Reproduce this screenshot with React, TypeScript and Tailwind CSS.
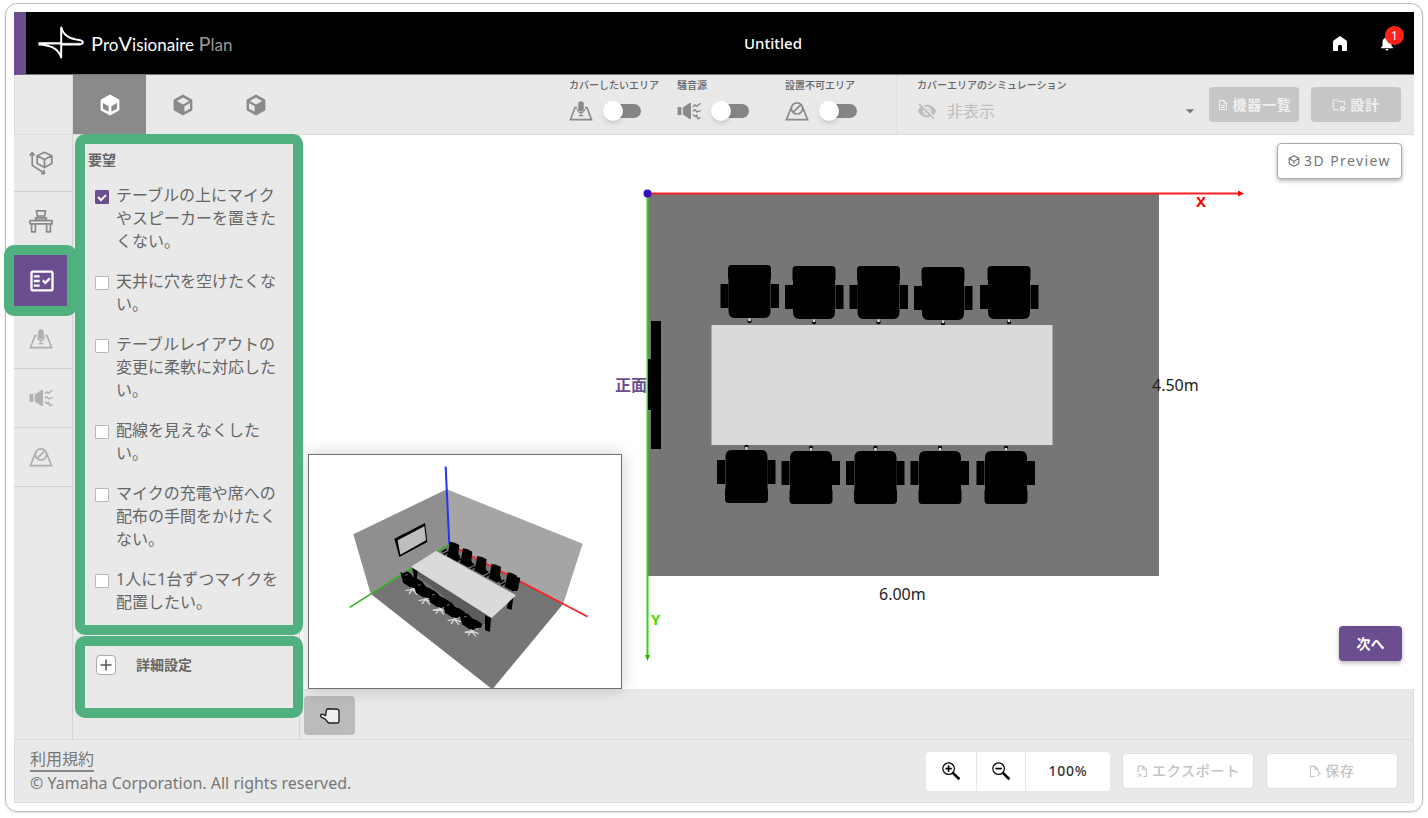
import React, { useState } from "react";
import {
  MdArrowDropDown,
  MdNotifications,
  MdOutlineDescription,
  MdOutlineFactCheck,
  MdVisibilityOff,
} from "react-icons/md";
import { LuFolderCog } from "react-icons/lu";

type IconProps = { className?: string };

const requests = [
  "テーブルの上にマイクやスピーカーを置きたくない。",
  "天井に穴を空けたくない。",
  "テーブルレイアウトの変更に柔軟に対応したい。",
  "配線を見えなくしたい。",
  "マイクの充電や席への配布の手間をかけたくない。",
  "1人に1台ずつマイクを配置したい。",
];

const LogoMark: React.FC<IconProps> = ({ className }) => (
  <svg viewBox="0 0 46 34" className={className} fill="none" aria-hidden="true">
    <path d="M2 17.6 H42" stroke="#aaa" strokeWidth="1.6" />
    <path
      d="M0.5 17.2 H23 M0.5 18.4 C11 19 20 21.4 23.2 31.5 V1.5 C25.5 10.5 33 13 41 14 C46 14.8 46 18.2 41.5 18.4 H24"
      stroke="#fff"
      strokeWidth="2"
      strokeLinejoin="round"
    />
  </svg>
);

const HomeIcon: React.FC<IconProps> = ({ className }) => (
  <svg viewBox="0 0 16 17" className={className} fill="currentColor" aria-hidden="true">
    <path d="M8 1 L14.4 5.6 Q15 6 15 6.8 V15 Q15 16 14 16 H10 V11.6 Q10 9.8 8 9.8 Q6 9.8 6 11.6 V16 H2 Q1 16 1 15 V6.8 Q1 6 1.6 5.6 Z" />
  </svg>
);

const CUBE_TOP = "M12 4.4 L18.2 7.9 L12 11.4 L5.8 7.9 Z";
const CUBE_LEFT = "M5 10 L10.6 13.2 V18.8 L5 15.8 Z";
const CUBE_RIGHT = "M19 10 L13.4 13.2 V18.8 L19 15.8 Z";

// Solid cube where only the given faces are cut out
const CubeIcon: React.FC<IconProps & { open: string[] }> = ({ className, open }) => (
  <svg viewBox="0 0 24 24" className={className} aria-hidden="true">
    <path
      fill="currentColor"
      fillRule="evenodd"
      strokeLinejoin="round"
      d={"M12 1.6 L20.6 6.2 Q21.4 6.7 21.4 7.6 V16.4 Q21.4 17.3 20.6 17.8 L12 22.4 L3.4 17.8 Q2.6 17.3 2.6 16.4 V7.6 Q2.6 6.7 3.4 6.2 Z " + open.join(" ")}
    />
  </svg>
);

const RoomIcon: React.FC<IconProps> = ({ className }) => (
  <svg viewBox="0 0 24 24" className={className} fill="none" stroke="currentColor" strokeWidth="1.7" strokeLinejoin="round" aria-hidden="true">
    <path d="M15.5 1.2 L22.8 4.8 V12.6 L15.5 16.6 L8.2 12.6 V4.8 Z M8.2 4.8 L15.5 8.6 L22.8 4.8 M15.5 8.6 V16.6" />
    <path d="M3.2 2.2 V14.2 L15 22" />
    <path d="M0.8 4.6 L3.2 1.6 L5.6 4.6 M12.2 23 L15.6 22.4 L14.6 18.8" />
  </svg>
);

const DeskIcon: React.FC<IconProps> = ({ className }) => (
  <svg viewBox="0 0 24 24" className={className} fill="none" stroke="currentColor" strokeWidth="1.7" strokeLinejoin="round" aria-hidden="true">
    <path d="M7.4 1.8 H16.6 L15.6 7 H8.4 Z M6.6 8.8 H17.4 V11.2 H6.6 Z M9 7 V8.8 M15 7 V8.8" />
    <path d="M1 11.6 H23 V14.8 H1 Z M2.6 14.8 H6.4 V22.8 H2.6 Z M17.6 14.8 H21.4 V22.8 H17.6 Z" />
  </svg>
);

const CoverIcon: React.FC<IconProps> = ({ className }) => (
  <svg viewBox="0 0 24 20" className={className} fill="none" stroke="currentColor" strokeWidth="1.6" aria-hidden="true">
    <path d="M8 6.6 H6 L1.4 18.6 H22.6 L18 6.6 H16" />
    <rect x="10" y="1" width="4" height="8.6" rx="2" fill="currentColor" />
    <path d="M8.4 8 Q8.8 11.6 12 11.6 Q15.2 11.6 15.600 8 M12 11.6 V14.6 M9.8 14.6 H14.2" strokeWidth="1.2" />
  </svg>
);

const NoiseIcon: React.FC<IconProps> = ({ className }) => (
  <svg viewBox="0 0 24 20" className={className} fill="none" stroke="currentColor" strokeWidth="1.4" aria-hidden="true">
    <path d="M0.6 6 H4.4 V14 H0.6 Z M5.8 6.4 L12.6 2 Q14 1.4 14 3 V17 Q14 18.6 12.6 18 L5.8 13.6 Z" fill="currentColor" stroke="none" />
    <path d="M15.8 6 L18 3.8 L19.4 5.4 L23.4 2.4 M15.8 10 L18.2 8.8 L19.8 11 L23.6 9.6 M15.8 13.6 L18 15.6 L19.6 14.4 L21 17.8 L23.6 16.6" />
  </svg>
);

const NoSetupIcon: React.FC<IconProps> = ({ className }) => (
  <svg viewBox="0 0 24 20" className={className} fill="none" stroke="currentColor" strokeWidth="1.7" aria-hidden="true">
    <path d="M6.2 6.6 L1.4 18.6 H22.6 L17.8 6.6" />
    <circle cx="12" cy="7.4" r="5.6" />
    <path d="M8 11.4 L16 3.6" />
  </svg>
);

const PreviewIcon: React.FC<IconProps> = ({ className }) => (
  <svg viewBox="0 0 12 12" className={className} fill="none" stroke="currentColor" strokeWidth="1.2" strokeLinejoin="round" aria-hidden="true">
    <path d="M6 0.8 L10.8 3.4 V8.6 L6 11.2 L1.2 8.6 V3.4 Z M3.4 4.8 L6 6.4 L8.6 4.8 M6 6.4 V9 M1.2 3.4 L3.4 4.8 M10.8 3.4 L8.6 4.8" />
  </svg>
);

const HandIcon: React.FC<IconProps> = ({ className }) => (
  <svg viewBox="0 0 22 18" className={className} fill="#eee" stroke="#222" strokeWidth="1.4" strokeLinejoin="round" aria-hidden="true">
    <path d="M7.4 3.2 Q7.6 1.8 9 1.8 L18 2.2 Q20 2.4 20 4 V14 Q20 16 18.6 16 H10.4 Q9.4 16 8.6 15 L6.6 12.4 L2.4 10.2 Q1 9 1.8 7.8 Q2.6 6.8 4 7.4 L6.6 8.6 Z" />
  </svg>
);

const MagnifierIcon: React.FC<IconProps & { plus?: boolean }> = ({ className, plus }) => (
  <svg viewBox="0 0 20 20" className={className} fill="none" stroke="#000" aria-hidden="true">
    <circle cx="7.6" cy="7.6" r="5.8" strokeWidth="1.2" />
    <path d="M4.4 7.6 H10.8" strokeWidth="1.7" />
    {plus && <path d="M7.6 4.4 V10.8" strokeWidth="1.7" />}
    <path d="M11.6 11.6 L18.4 18.2" strokeWidth="2.6" />
  </svg>
);

const ExportIcon: React.FC<IconProps> = ({ className }) => (
  <svg viewBox="0 0 12 14" className={className} fill="none" stroke="currentColor" strokeWidth="1.2" aria-hidden="true">
    <path d="M2 7.6 V1.2 H7 L10.6 4.8 V12.4 H7.4 M7 1.2 V4.8 H10.6" />
    <path d="M1.4 10 H4.8 V13.2 M4.8 10 L1.4 13.2" strokeWidth="1" />
  </svg>
);

const SaveIcon: React.FC<IconProps> = ({ className }) => (
  <svg viewBox="0 0 13 14" className={className} fill="none" stroke="currentColor" strokeWidth="1.2" aria-hidden="true">
    <path d="M6 12.4 H1.6 V1.2 H6.4 L9.8 4.6 V6 M6.4 1.2 V4.6 H9.8" />
    <path d="M9.4 7 L12 9.2 L8.6 12.2" />
  </svg>
);

const Chair: React.FC<{ x: number; y: number; flip?: boolean }> = ({ x, y, flip }) => (
  <g transform={`translate(${x} ${y})${flip ? " rotate(180)" : ""}`}>
    <rect x="-29" y="19" width="8" height="24" />
    <rect x="21.5" y="19" width="8" height="24" />
    <path d="M-18 0 H18 Q21.5 0 21.5 4 V13 L21 15 V46 Q21 53 15 53 H-15 Q-21 53 -21 46 V15 L-21.5 13 V4 Q-21.5 0 -18 0 Z" />
    <circle cx="0" cy="56" r="2.2" />
    <rect x="-1.3" y="53.5" width="2.6" height="2.6" fill="#ddd" />
  </g>
);

const topChairs = [
  [101.5, 72],
  [166, 73],
  [230.5, 73],
  [295, 74],
  [361, 73],
];
const bottomChairs = [
  [98.5, 310],
  [163, 311],
  [227.5, 311],
  [292, 311],
  [358, 311],
];

const FloorPlan: React.FC = () => (
  <svg
    viewBox="0 0 1114 554"
    className="h-full w-full font-['Noto_Sans','Noto_Sans_CJK_JP',sans-serif]"
    role="img"
    aria-label="Floor plan"
  >
    <g transform="translate(348 58)">
      <rect width="511" height="383" fill="#767676" />
      <rect x="63.5" y="132" width="341" height="120" fill="#dadada" />
      <path d="M3 128 H13 V256 H3 V217 H0 V166 H3 Z" />
      {topChairs.map(([x, y]) => (
        <Chair key={x} x={x} y={y} />
      ))}
      {bottomChairs.map(([x, y]) => (
        <Chair key={x} x={x} y={y} flip />
      ))}
      <path d="M0 0.5 H591" stroke="#f52222" strokeWidth="2" />
      <path d="M590 -2.5 L596 0.5 L590 3.5 Z" fill="#f00" />
      <path d="M-0.5 0 V464" stroke="#3ccc1c" strokeWidth="2" />
      <path d="M0 166 H3 V217 H0 Z" />
      <path d="M-3 462 L-0.5 468 L2 462 Z" fill="#2b0" />
      <circle cx="-0.5" cy="0.5" r="4" fill="#3a0cc4" />
      <text x="548" y="14" fontSize="15" fontWeight="700" fill="#f00">
        X
      </text>
      <text x="3" y="432" fontSize="15" fontWeight="700" fill="#4fd800">
        Y
      </text>
      <text x="-33" y="198" fontSize="16" fontWeight="700" fill="#6b4f8f">
        正面
      </text>
      <text x="504" y="198" fontSize="16" fill="#222">
        4.50m
      </text>
      <text x="231" y="407" fontSize="16" fill="#222">
        6.00m
      </text>
    </g>
  </svg>
);

const backSeats = [
  [448, 290],
  [487, 310],
  [530, 333],
  [573, 356],
  [621, 382],
];
const frontSeats = [
  [337, 404],
  [376, 434],
  [418, 463],
  [463, 494],
  [514, 529],
];

const RoomView: React.FC = () => (
  <svg viewBox="27 29 936 699" className="block h-[233px] w-[312px]" role="img" aria-label="Room view">
    <path d="M160 267 L440 132 L448 297 L212 445 Z" fill="#8f8f8f" />
    <path d="M440 132 L848 295 L790 475 L448 297 Z" fill="#a5a5a5" />
    <path d="M448 297 L790 475 L577 732 L212 445 Z" fill="#757575" />
    <path d="M283 280 L375 233 L382 290 L298 335 Z" />
    <path d="M293 285 L373 243 L378 285 L301 328 Z" fill="#bdbdbd" />
    <path d="M448 297 L149 486" stroke="#2eb51c" strokeWidth="5" />
    <path d="M448 297 L863 514" stroke="#f22" strokeWidth="5" />
    <path d="M437 64 L448 297" stroke="#2434f0" strokeWidth="6" />
    {backSeats.map(([x, y]) => (
      <g key={x} transform={`translate(${x} ${y})`}>
        <path d="M2 -1 Q16 0 30 9 L27 34 L32 50 L18 56 L-8 42 L-4 32 Z" />
        <path d="M-22 30 L-8 22 M-18 38 L-4 30" stroke="#000" strokeWidth="5" />
      </g>
    ))}
    <path d="M650 394 L661 398 L653 436 L636 438 Z" />
    <path d="M333 364 L575 518 L575 530 L540 540 L336 378 Z" fill="#5c5c5c" />
    <path d="M338 368 L353 377 L350 402 L342 398 Z" />
    <path d="M555 510 L573 518 L570 559 L555 555 Z" />
    <path d="M627 460 L640 456 L635 493 L620 489 Z" />
    {frontSeats.map(([x, y]) => (
      <g key={x} transform={`translate(${x} ${y})`}>
        <path
          d="M0 12 V28 M-20 32 L0 28 L22 36 M-10 42 L0 28 L14 44 M22 18 L0 28"
          stroke="#d6d6d6"
          strokeWidth="4"
          fill="none"
        />
        <path d="M-36 -24 L-28 -20 L-16 -26 L-6 -20 L2 -10 L16 -4 L32 6 L30 18 L16 20 L8 25 L-8 21 L-28 8 Z" />
        <path d="M-22 -14 L-14 -16" stroke="#777" strokeWidth="3" />
      </g>
    ))}
    <path d="M408 316 L648 450 L575 518 L333 364 Z" fill="#dadada" />
  </svg>
);

const Toggle: React.FC<{ label: string; icon: React.ReactNode }> = ({ label, icon }) => (
  <label className="flex w-[108px] flex-col gap-[9px] text-[10px] leading-[14px] font-medium text-[#666]">
    <span className="whitespace-nowrap">{label}</span>
    <span className="flex h-5 items-center gap-[14px] text-[#8a8a8a]">
      {icon}
      <input
        type="checkbox"
        role="switch"
        className="flex h-[14px] w-[34px] appearance-none items-center rounded-full bg-[#858585] before:-ml-1 before:block before:size-5 before:shrink-0 before:rounded-full before:bg-white before:shadow-md checked:justify-end checked:bg-[#6b4e8f]"
      />
    </span>
  </label>
);

const railItems = [
  { label: "部屋", icon: <RoomIcon className="size-6" />, tone: "text-[#8a8a8a]" },
  { label: "レイアウト", icon: <DeskIcon className="size-6" />, tone: "text-[#8a8a8a]" },
  { label: "要望", icon: <MdOutlineFactCheck className="size-7" />, active: true },
  { label: "カバーしたいエリア", icon: <CoverIcon className="h-5 w-6" />, tone: "text-[#b0b0b0]" },
  { label: "騒音源", icon: <NoiseIcon className="h-5 w-6" />, tone: "text-[#b0b0b0]" },
  { label: "設置不可エリア", icon: <NoSetupIcon className="h-5 w-6" />, tone: "text-[#b0b0b0]" },
];

const App: React.FC = () => {
  const [checked, setChecked] = useState<number[]>([0]);

  const toggle = (index: number) =>
    setChecked((prev) => (prev.includes(index) ? prev.filter((i) => i !== index) : [...prev, index]));

  return (
    <div className="flex min-h-screen flex-col bg-white px-[5px] pt-[3px] pb-[7px] font-['Noto_Sans','Noto_Sans_CJK_JP',sans-serif]">
      <div className="flex flex-1 flex-col rounded-xl border border-[#bbb] p-2 shadow-sm">
        <header className="flex h-[63px] items-center border-b border-[#777] border-l-[12px] border-l-[#6b4e8f] bg-black pr-[18px] text-white">
          <div className="flex flex-1 items-center gap-[7px] pl-3">
            <LogoMark className="h-[34px] w-[46px]" />
            <div className="font-['Lato',sans-serif] text-[17px] leading-6 whitespace-nowrap">
              <span className="text-xl">P</span>ro<span className="text-xl">V</span>isionaire{" "}
              <span className="text-[#999]">
                <span className="text-xl">P</span>lan
              </span>
            </div>
          </div>
          <h1 className="pl-28 text-[15px] font-medium">Untitled</h1>
          <div className="flex flex-1 items-center justify-end gap-[30px]">
            <button type="button" aria-label="ホーム">
              <HomeIcon className="h-[17px] w-4" />
            </button>
            <button type="button" aria-label="お知らせ" className="relative">
              <MdNotifications className="size-[18px]" />
              <span className="absolute -top-2 -right-2 flex size-[19px] items-center justify-center rounded-full bg-[#ff2318] text-xs">
                1
              </span>
            </button>
          </div>
        </header>

        <div className="flex h-[60px] border-b border-[#dcdcdc] bg-[#e9e9e9]">
          <div className="w-[59px] border-x border-[#dcdcdc]" />
          <nav className="flex flex-1 text-[#8a8a8a]">
            <button type="button" aria-label="上面" className="flex w-[73px] items-center justify-center bg-[#8a8a8a] text-white">
              <CubeIcon className="size-6" open={[CUBE_LEFT, CUBE_RIGHT]} />
            </button>
            <button type="button" aria-label="左面" className="flex w-[73px] items-center justify-center">
              <CubeIcon className="size-6" open={[CUBE_TOP, CUBE_RIGHT]} />
            </button>
            <button type="button" aria-label="右面" className="flex w-[73px] items-center justify-center">
              <CubeIcon className="size-6" open={[CUBE_TOP, CUBE_LEFT]} />
            </button>
          </nav>
          <div className="flex pt-[3px] pr-[3px]">
            <Toggle label="カバーしたいエリア" icon={<CoverIcon className="h-5 w-6" />} />
            <Toggle label="騒音源" icon={<NoiseIcon className="h-5 w-6" />} />
            <Toggle label="設置不可エリア" icon={<NoSetupIcon className="h-5 w-6" />} />
          </div>
          <div className="flex w-[304px] flex-col gap-2 border-l border-[#e0e0e0] pt-[3px] pl-5 text-[#bdbdbd]">
            <label htmlFor="simulation" className="text-[10px] leading-[14px] font-medium text-[#666]">
              カバーエリアのシミュレーション
            </label>
            <div className="flex h-[22px] items-center gap-[10px] border-b border-[#e4e4e4]">
              <MdVisibilityOff className="size-5" />
              <select id="simulation" className="flex-1 appearance-none text-base leading-5 outline-none">
                <option>非表示</option>
              </select>
              <MdArrowDropDown className="size-5 text-[#777]" />
            </div>
          </div>
          <div className="flex gap-3 pt-3 pr-[13px] pl-[9px] text-sm font-bold tracking-wider text-[#f0f0f0]">
            <button type="button" className="flex h-[35px] w-[90px] items-center justify-center gap-1 rounded bg-[#c6c6c6]">
              <MdOutlineDescription className="size-3" />
              機器一覧
            </button>
            <button type="button" className="flex h-[35px] w-[90px] items-center justify-center gap-1 rounded bg-[#c6c6c6]">
              <LuFolderCog className="size-[14px]" />
              設計
            </button>
          </div>
        </div>

        <div className="flex flex-1">
          <nav className="z-20 flex w-[59px] flex-col border-r border-[#d4d4d4] bg-[#e9e9e9]">
            {railItems.map((item) =>
              item.active ? (
                <button
                  key={item.label}
                  type="button"
                  aria-label={item.label}
                  className="relative flex h-[59px] w-[59px] items-center justify-center bg-[#6b4e8f] pr-1 text-white"
                >
                  {item.icon}
                  <span className="absolute -top-[6px] -right-1 -bottom-[6px] -left-[10px] rounded-[10px] border-[10px] border-[#50b080]" />
                </button>
              ) : (
                <button
                  key={item.label}
                  type="button"
                  aria-label={item.label}
                  className={`flex h-[59px] items-center justify-center border-b border-[#d0d0d0] pr-1 first:h-[57px] ${item.tone}`}
                >
                  {item.icon}
                </button>
              )
            )}
          </nav>

          <aside className="z-10 flex w-[227px] flex-col gap-px border-r border-[#d4d4d4] bg-[#e9e9e9] pl-[2px] text-[#666]">
            <section className="-mt-px -mr-1 rounded-[10px] border-[10px] border-[#50b080] bg-[#e9e9e9] pt-[6px] pb-[11px] pl-[3px]">
              <h2 className="text-sm leading-5 font-bold">要望</h2>
              <ul className="mt-[14px] flex flex-col gap-[17px] pl-[7px]">
                {requests.map((text, index) => (
                  <li key={text}>
                    <label className="flex gap-[7px] text-base leading-[23px]">
                      <input
                        type="checkbox"
                        checked={checked.includes(index)}
                        onChange={() => toggle(index)}
                        className="mt-[6px] size-[14px] shrink-0 appearance-none rounded-[1px] border border-[#b8b8b8] bg-white bg-center bg-no-repeat checked:border-[#6b4e8f] checked:bg-[#6b4e8f] checked:bg-[url('data:image/svg+xml,%3Csvg%20xmlns=%22http://www.w3.org/2000/svg%22%20width=%2212%22%20height=%2212%22%3E%3Cpath%20d=%22M2%206l3%203%205-5%22%20fill=%22none%22%20stroke=%22white%22%20stroke-width=%222%22/%3E%3C/svg%3E')]"
                      />
                      <span className="w-[168px]">{text}</span>
                    </label>
                  </li>
                ))}
              </ul>
            </section>
            <section className="-mr-1 flex h-[82px] items-start gap-5 rounded-[10px] border-[10px] border-[#50b080] bg-[#e9e9e9] pt-[9px] pl-[11px]">
              <button
                type="button"
                aria-label="詳細設定を開く"
                className="flex size-5 items-center justify-center rounded border border-[#aaa] bg-white"
              >
                <svg viewBox="0 0 12 12" className="size-3" stroke="#555" strokeWidth="1.5" aria-hidden="true">
                  <path d="M0.5 6 H11.5 M6 0.5 V11.5" />
                </svg>
              </button>
              <h2 className="text-sm leading-5 font-bold">詳細設定</h2>
            </section>
          </aside>

          <main className="flex min-w-0 flex-1 flex-col">
            <div className="relative min-h-0 flex-1">
              <FloorPlan />
              <div className="absolute bottom-0 left-2 border border-[#707070] bg-white shadow-[0_0_16px_rgba(0,0,0,0.2)]">
                <RoomView />
              </div>
              <button
                type="button"
                className="absolute top-2 right-3 flex h-9 w-[125px] items-center justify-center gap-1 rounded border border-[#aaa] bg-white text-sm tracking-widest text-[#777] shadow-[0_2px_4px_rgba(0,0,0,0.3)]"
              >
                <PreviewIcon className="size-3" />
                3D Preview
              </button>
              <button
                type="button"
                className="absolute right-3 bottom-7 h-[35px] w-[63px] rounded bg-[#6b4e8f] text-sm font-bold text-white shadow-[0_2px_4px_rgba(0,0,0,0.3)]"
              >
                次へ
              </button>
            </div>
            <div className="h-[50px] border-r border-[#dcdcdc] bg-[#e9e9e9] pt-[7px] pl-1">
              <button
                type="button"
                aria-label="移動"
                className="flex h-[39px] w-[51px] items-center justify-center rounded bg-[#bbb]"
              >
                <HandIcon className="h-[18px] w-[22px]" />
              </button>
            </div>
          </main>
        </div>

        <footer className="flex h-16 items-center border border-[#dcdcdc] bg-[#e9e9e9] px-[15px]">
          <div className="flex flex-1 flex-col items-start text-base leading-[22px] text-[#777]">
            <a href="#terms" className="border-b-2 border-[#888]">
              利用規約
            </a>
            <p>© Yamaha Corporation. All rights reserved.</p>
          </div>
          <div className="flex items-center gap-3 text-sm text-[#c4c4c4]">
            <div className="flex h-[39px] overflow-hidden rounded bg-white">
              <button type="button" aria-label="拡大" className="flex w-[50px] items-center justify-center">
                <MagnifierIcon className="size-5" plus />
              </button>
              <button type="button" aria-label="縮小" className="flex w-[50px] items-center justify-center border-x border-[#e9e9e9]">
                <MagnifierIcon className="size-5" />
              </button>
              <button type="button" className="w-[84px] font-medium tracking-wider text-[#333]">
                100%
              </button>
            </div>
            <button type="button" className="flex h-9 w-[132px] items-center justify-center gap-1 rounded border border-[#dedede] bg-white font-medium tracking-wider">
              <ExportIcon className="h-[13px] w-3" />
              エクスポート
            </button>
            <button type="button" className="flex h-9 w-[132px] items-center justify-center gap-1 rounded border border-[#dedede] bg-white font-medium tracking-wider">
              <SaveIcon className="h-[13px] w-3" />
              保存
            </button>
          </div>
        </footer>
      </div>
    </div>
  );
};

export default App;
